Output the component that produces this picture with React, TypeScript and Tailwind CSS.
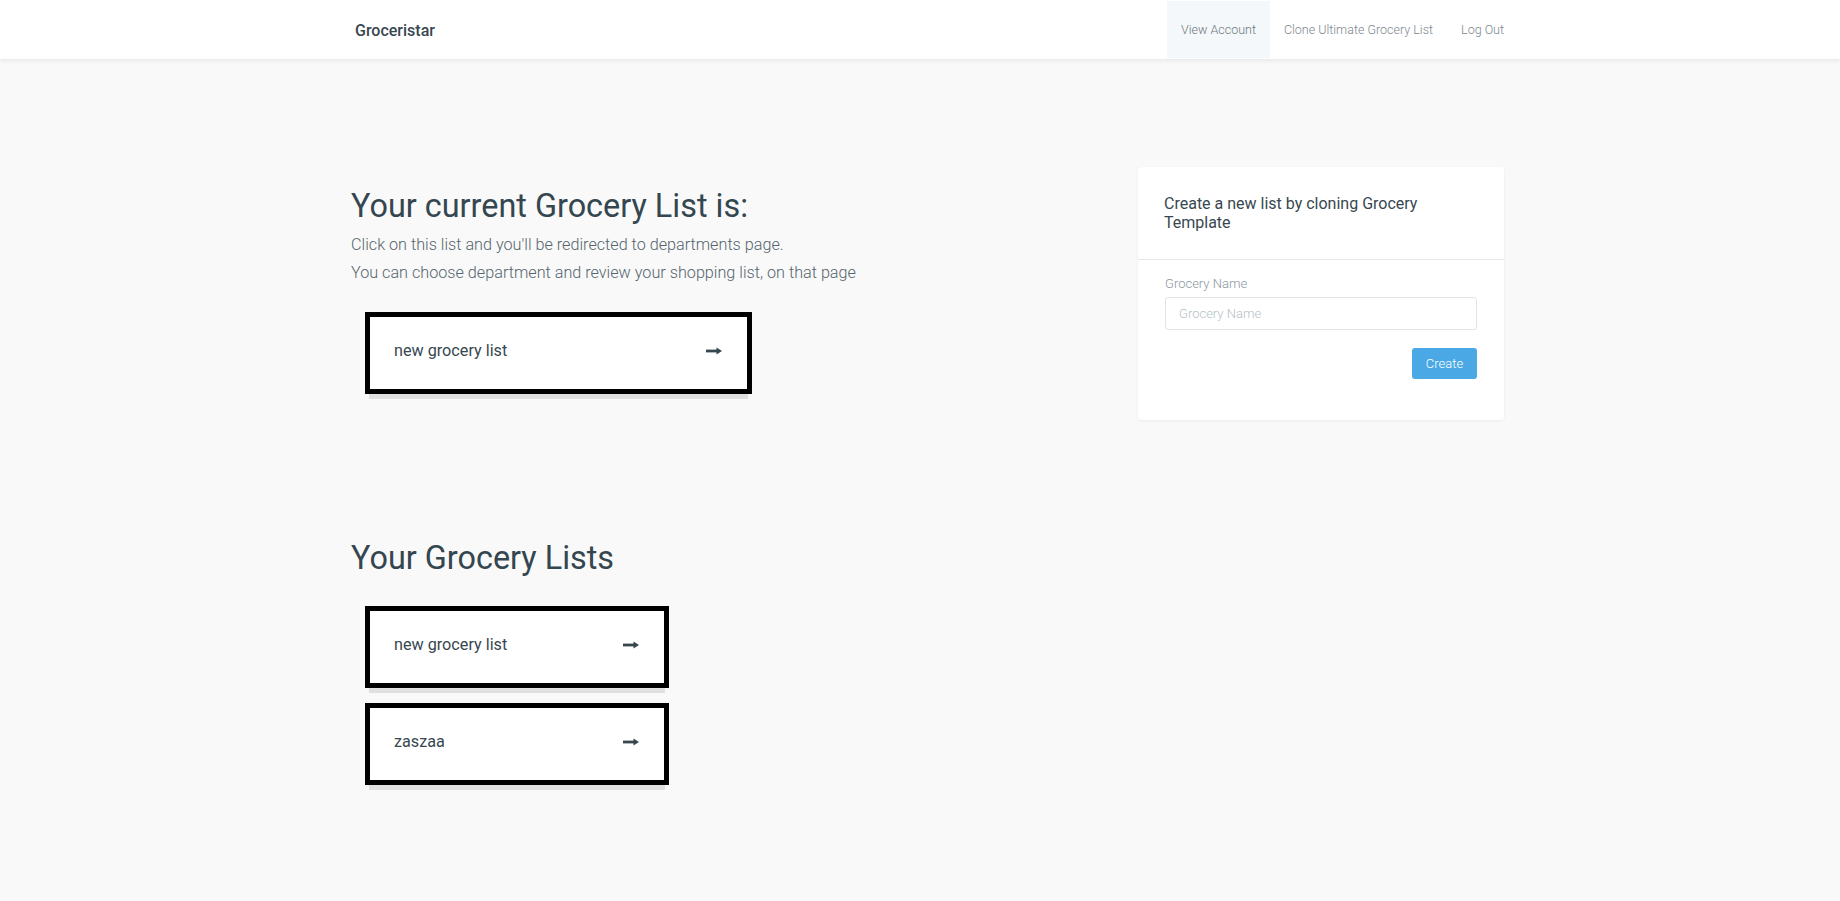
const lists = ["new grocery list", "zaszaa"];

function Arrow() {
  return (
    <svg width="16" height="8" viewBox="0 0 16 8" className="text-[#37474f]">
      <rect x="0" y="2.6" width="12" height="2.8" fill="currentColor" />
      <path d="M10.5 0.5 L16 4 L10.5 7.5 Z" fill="currentColor" />
    </svg>
  );
}

function ListCard({ name }: { name: string }) {
  return (
    <a
      href="#"
      className="h-[82px] bg-white border-[5px] border-black flex items-center justify-between pl-[24px] pr-[25px] pb-[4px] shadow-[0_9px_0_-4px_#e0e0e0]"
    >
      <span className="text-[16.2px] text-[#37474f]">{name}</span>
      <Arrow />
    </a>
  );
}

export default function App() {
  return (
    <div className="min-h-screen bg-[#f9f9f9] font-[Roboto,sans-serif] text-[#37474f]">
      {/* Navbar */}
      <nav className="h-[59px] bg-white shadow-[0_2px_4px_rgba(0,0,0,0.07)] relative">
        <div className="ml-[350px] w-[1154px] h-full flex items-center justify-between pt-[2px]">
          <a href="#" className="pl-[5px] text-[16px] font-medium text-[#37474f]">
            Groceristar
          </a>
          <ul className="flex h-full -mt-[2px] -mr-[14px] text-[12.5px] font-light text-[#7c8790]">
            <li className="h-full flex items-center pt-[2px] px-[14px] bg-[#f5f8fa] text-[#6b7780]">View Account</li>
            <li className="h-full flex items-center pt-[2px] px-[14px]">Clone Ultimate Grocery List</li>
            <li className="h-full flex items-center pt-[2px] px-[14px]">Log Out</li>
          </ul>
        </div>
      </nav>

      <main className="ml-[351px] w-[1153px] pt-[108px] flex justify-between">
        {/* Left column */}
        <section className="w-[720px]">
          <h1 className="mt-[22px] text-[32.4px] leading-[35px] text-[#34464f]">Your current Grocery List is:</h1>
          <div className="mt-[7px] text-[16.2px] leading-[28px] font-light text-[#56656d]">
            <p>Click on this list and you'll be redirected to departments page.</p>
            <p>You can choose department and review your shopping list, on that page</p>
          </div>
          <div className="mt-[25px] ml-[14px] w-[387px]">
            <ListCard name="new grocery list" />
          </div>

          <h1 className="mt-[147px] text-[32.4px] leading-[35px] text-[#34464f]">Your Grocery Lists</h1>
          <div className="mt-[30px] ml-[14px] w-[304px] flex flex-col gap-[15px]">
            {lists.map((l) => (
              <ListCard key={l} name={l} />
            ))}
          </div>
        </section>

        {/* Right column - create panel */}
        <aside className="w-[366px] h-fit bg-white rounded-[4px] shadow-[0_1px_3px_rgba(0,0,0,0.06)]">
          <div className="px-[26px] pt-[28px] pb-[27px] text-[16px] leading-[18.5px] text-[#37474f] border-b border-[#e6e9ec]">
            Create a new list by cloning Grocery Template
          </div>
          <div className="px-[27px] pt-[15px] pb-[41px]">
            <label className="block text-[13px] leading-[18px] font-light text-[#8a98a3]">Grocery Name</label>
            <input
              placeholder="Grocery Name"
              className="mt-[4px] h-[33px] w-full border border-[#dfe4e8] rounded-[3px] px-[13px] text-[13px] font-light outline-none placeholder:text-[#b5bfc8]"
            />
            <div className="mt-[18px] flex justify-end">
              <button className="h-[31px] w-[65px] rounded-[3px] bg-[#4aa9e4] text-[13px] font-light text-white">
                Create
              </button>
            </div>
          </div>
        </aside>
      </main>
    </div>
  );
}
